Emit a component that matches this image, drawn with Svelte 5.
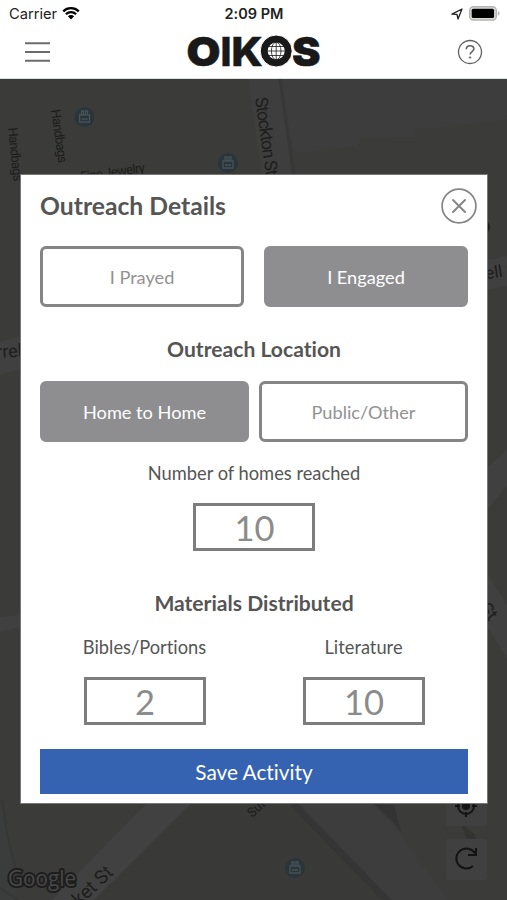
<script lang="ts">
	let engagement = $state('engaged');
	let location = $state('home');

	const shops = [
		{ x: 84.5, y: 117 },
		{ x: 228, y: 163 },
		{ x: 295, y: 868 }
	];
</script>

<div class="screen">
	<header>
		<div class="status">
			<div class="carrier">
				<span>Carrier</span>
				<svg width="18" height="14" viewBox="0 0 18 14">
					<path d="M1.2 5.3a11.2 11.2 0 0 1 15.6 0M3.9 8.3a7.3 7.3 0 0 1 10.2 0" fill="none" stroke="#000" stroke-width="2.3" />
					<path d="M5.9 10.3a4.4 4.4 0 0 1 6.2 0L9 13.4z" />
				</svg>
			</div>
			<span class="time">2:09 PM</span>
			<div class="indicators">
				<svg width="12" height="12" viewBox="0 0 12 12">
					<path d="M1 6.2 11 1 7 11 6 6.4z" fill="none" stroke="#222" stroke-width="1.3" stroke-linejoin="round" />
				</svg>
				<svg width="31" height="15" viewBox="0 0 31 15">
					<rect x=".7" y=".7" width="26.6" height="13.3" rx="3.6" fill="#dcdcda" stroke="#b4b4b1" stroke-width="1.4" />
					<rect x="2.7" y="2.7" width="22.4" height="9.4" rx="1.6" />
					<path d="M28.8 5v4.8q1.8-.9 1.8-2.4T28.8 5z" fill="#b4b4b1" />
				</svg>
			</div>
		</div>
		<div class="bar">
			<button class="icon" aria-label="Menu">
				<svg width="25" height="22" viewBox="0 0 25 22">
					<path d="M0 2.2h25M0 11h25M0 19.8h25" stroke="#6c6c6c" stroke-width="1.9" />
				</svg>
			</button>
			<svg class="logo" width="136" height="50" viewBox="0 -5 136 50" aria-label="OIKOS">
				<text x="0.5" y="34.3" textLength="34" lengthAdjust="spacingAndGlyphs">O</text>
				<text class="narrow" x="34.6" y="34.3" textLength="11" lengthAdjust="spacingAndGlyphs">I</text>
				<text class="narrow" x="45.2" y="34.3" textLength="31.5" lengthAdjust="spacingAndGlyphs">K</text>
				<text x="106" y="34.3" textLength="28.5" lengthAdjust="spacingAndGlyphs">S</text>
				<circle cx="90.2" cy="19" r="16" fill="#191919" stroke="#fff" stroke-width="1" />
				<circle cx="90.2" cy="19" r="8.5" fill="#fff" />
				<g fill="none" stroke="#191919" stroke-width=".8">
					<ellipse cx="90.2" cy="19" rx="4.8" ry="8.8" />
					<path d="M90.2 10v18M81.5 19h17.4M82.5 14.5h15.4M82.5 23.5h15.4" />
				</g>
			</svg>
			<button class="icon" aria-label="Help">
				<svg width="26" height="26" viewBox="0 0 26 26" fill="none" stroke="#626262">
					<circle cx="13" cy="13" r="11.5" stroke-width="1.3" />
					<path d="M9.3 10.2c0-4.6 7.6-4.5 7.6-.4 0 2.8-3.8 2.7-3.8 5.7" stroke-width="1.6" />
					<circle cx="13.1" cy="18.5" r=".7" fill="#626262" />
				</svg>
			</button>
		</div>
	</header>

	<main>
		<svg class="map" width="507" height="821" viewBox="0 79 507 821">
			<rect y="79" width="507" height="821" fill="#3b3b3a" />
			<path d="M0 79h248l14 97H0z" fill="#3b3b39" />
			<path d="M266 79h241v40l-50 7-42 3v8l-53 1-4 8-54 6-9-1z" fill="#3d3d3d" />
			<path d="M248 79h32l14 98h-32z" fill="#3e3e3e" />
			<path d="M280 79l14 98" stroke="#373737" stroke-width="3" />
			<path d="M0 342l22-6v32l-22 7zM486 260l21-4v30l-21 4zM486 469l21-19v36l-21 25z" fill="#404040" />
			<path d="M0 617l22-2v12l-22 5zM486 571l21 34v54l-21-35z" fill="#404040" />
			<path d="M0 800l8 32 7 68H0z" fill="#3b3d3c" />
			<path d="M2 800l5 34 10 40M0 888l18 12" fill="none" stroke="#343837" stroke-width="2" />
			<path d="M150 800h45L94 900H52z" fill="#414141" />
			<path d="M195 800h90l106 100H94z" fill="#393938" />
			<path d="M300 804h74l20 22 54 74h-58z" fill="#3d3d3d" />
			<path d="M293 804l96 98" stroke="#353535" stroke-width="7" />
			<path d="M374 804l20 1 7 27-8-10zM460 822l15 13 3 18-10-11z" fill="#333" />

			{#each shops as shop}
				<g transform="translate({shop.x} {shop.y})">
					<circle r="10" fill="#29353a" />
					<path d="M-5-2H5v7H-5zM-3-2v-4h2v4m2 0v-4h2v4M-3 2h6" fill="none" stroke="#465256" stroke-width="1.3" />
				</g>
			{/each}

			<g class="labels">
				<text transform="translate(51 110) rotate(82)" font-size="13" textLength="54">Handbags</text>
				<text transform="translate(8 128) rotate(84)" font-size="13" textLength="54">Handbags</text>
				<text transform="translate(81 181) rotate(-8)" font-size="13" textLength="65">Fine Jewelry</text>
				<text transform="translate(255 98) rotate(82)" font-size="17.5" textLength="79">Stockton St</text>
				<text x="-23" y="358" font-size="18" transform="rotate(-4 0 356)">Farrell</text>
				<text x="486" y="279" font-size="17" transform="rotate(-8 487 279)">ell St</text>
				<text transform="translate(479 609) rotate(50)" font-size="18">St</text>
				<text transform="translate(67 918) rotate(-43)" font-size="19">arket St</text>
				<text transform="translate(252 818) rotate(-42)" font-size="13">Sutter</text>
				<circle cx="484" cy="227" r="6" />
			</g>
			<text class="google" x="8" y="886" textLength="68" lengthAdjust="spacingAndGlyphs">Google</text>

			<g class="controls">
				<rect x="446" y="786" width="41" height="40" rx="2" />
				<rect x="446" y="839" width="41" height="41" rx="2" />
				<g fill="none" stroke="#131313" stroke-width="2">
					<circle cx="466" cy="806" r="8" />
					<path d="M466 795v5m0 12v5m-11-11h5m12 0h5M475 853.5A10 10 0 1 0 473 866M476 848v7h-8" />
				</g>
				<circle cx="466" cy="806" r="4" fill="#131313" />
			</g>
		</svg>

		<section class="dialog">
			<div class="heading">
				<h1>Outreach Details</h1>
				<button class="icon" aria-label="Close">
					<svg width="36" height="36" viewBox="0 0 36 36" fill="none" stroke="#858585">
						<circle cx="18" cy="18" r="16.9" stroke-width="1.7" />
						<path d="M12 12l12 12M24 12L12 24" stroke-width="2" stroke-linecap="round" />
					</svg>
				</button>
			</div>

			<div class="choices wide">
				<button class:selected={engagement === 'prayed'} onclick={() => (engagement = 'prayed')}>I Prayed</button>
				<button class:selected={engagement === 'engaged'} onclick={() => (engagement = 'engaged')}>I Engaged</button>
			</div>

			<h2>Outreach Location</h2>
			<div class="choices">
				<button class:selected={location === 'home'} onclick={() => (location = 'home')}>Home to Home</button>
				<button class:selected={location === 'public'} onclick={() => (location = 'public')}>Public/Other</button>
			</div>

			<label class="field homes">
				<span>Number of homes reached</span>
				<input value="10" inputmode="numeric" />
			</label>

			<h2 class="materials-title">Materials Distributed</h2>
			<div class="materials">
				<label class="field">
					<span>Bibles/Portions</span>
					<input value="2" inputmode="numeric" />
				</label>
				<label class="field">
					<span>Literature</span>
					<input value="10" inputmode="numeric" />
				</label>
			</div>

			<button class="save">Save Activity</button>
		</section>
	</main>
</div>

<style>
	:global(body) {
		margin: 0;
	}

	.screen {
		width: 507px;
		height: 900px;
		display: flex;
		flex-direction: column;
		overflow: hidden;
		background: #fff;
		font-family: Lato, sans-serif;
		font-variant-ligatures: none;
	}

	button {
		padding: 0;
		border: 0;
		background: none;
		font-family: inherit;
		font-variant-ligatures: inherit;
	}

	svg {
		display: block;
	}

	header {
		height: 79px;
		box-sizing: border-box;
		border-bottom: 1px solid #dfe3e2;
	}

	.status {
		display: grid;
		grid-template-columns: 1fr auto 1fr;
		align-items: center;
		height: 27px;
		padding: 0 7px 0 9px;
		font-family: Inter, sans-serif;
		font-size: 14.7px;
		color: #222;
	}

	.carrier {
		display: flex;
		align-items: center;
		gap: 5px;
	}

	.carrier svg {
		margin-top: -2px;
	}

	.time {
		margin-right: 1px;
		font-size: 14.5px;
		font-weight: 600;
	}

	.indicators {
		display: flex;
		align-items: center;
		justify-content: flex-end;
		gap: 6px;
	}

	.bar {
		display: flex;
		align-items: center;
		justify-content: space-between;
		height: 50px;
		padding: 0 24px 0 25px;
	}

	.logo {
		margin-right: -1px;
		margin-top: -1px;
	}

	.logo text {
		font: 900 40px Inter, sans-serif;
		fill: #191919;
		stroke: #191919;
		stroke-width: 0.5px;
	}

	.logo text.narrow {
		font-weight: 800;
	}

	main {
		display: grid;
		flex: 1;
		min-height: 0;
	}

	.map,
	.dialog {
		grid-area: 1 / 1;
	}

	.labels {
		font-family: Roboto, sans-serif;
		fill: #1d1d1d;
	}

	.google {
		font: 500 21px "Open Sans", sans-serif;
		fill: #484848;
		stroke: #1e1e1e;
		stroke-width: 4px;
		stroke-linejoin: round;
		paint-order: stroke;
	}

	.controls rect {
		fill: #404040;
	}

	.dialog {
		position: relative;
		display: flex;
		flex-direction: column;
		width: 466px;
		height: 628px;
		box-sizing: border-box;
		margin: 96px 0 0 21px;
		padding: 0 19px;
		background: #fff;
		box-shadow: 0 0 0 1px #777;
		color: #555;
	}

	.heading {
		display: flex;
		align-items: center;
		justify-content: space-between;
		height: 61px;
		margin: 0 -9px 10px 0;
	}

	h1,
	h2 {
		margin: 0;
		font-weight: 700;
	}

	h1 {
		font-size: 24.7px;
	}

	h2 {
		height: 28px;
		margin: 28px 0 18px;
		font-size: 21.1px;
		line-height: 28px;
		text-align: center;
	}

	.choices {
		display: grid;
		grid-template-columns: 1fr 1fr;
		gap: 10px;
	}

	.choices.wide {
		gap: 20px;
	}

	.choices button {
		height: 61px;
		border: 3px solid #858585;
		border-radius: 6px;
		font-size: 18.2px;
		color: #929292;
	}

	.choices button.selected {
		border-color: #8e8e91;
		background: #8e8e91;
		color: #fff;
	}

	.field {
		display: flex;
		flex-direction: column;
		align-items: center;
		font-size: 18.3px;
		line-height: 24px;
	}

	.homes {
		margin-top: 19px;
		gap: 18px;
	}

	input {
		width: 122px;
		height: 48px;
		box-sizing: border-box;
		padding: 0 0 0 1px;
		border: 3px solid #7d7d7d;
		border-radius: 0;
		background: #fff;
		font: 34.5px Lato, sans-serif;
		color: #8b8b8b;
		text-align: center;
	}

	h2.materials-title {
		margin: 38px 0 18px;
	}

	.materials {
		display: grid;
		grid-template-columns: 219px 219px;
		margin: 0 -5px;
	}

	.materials .field {
		gap: 18px;
	}

	.save {
		height: 45px;
		margin-top: 24px;
		flex: none;
		background: #3562b1;
		color: #fff;
		font-size: 20.8px;
	}
</style>
